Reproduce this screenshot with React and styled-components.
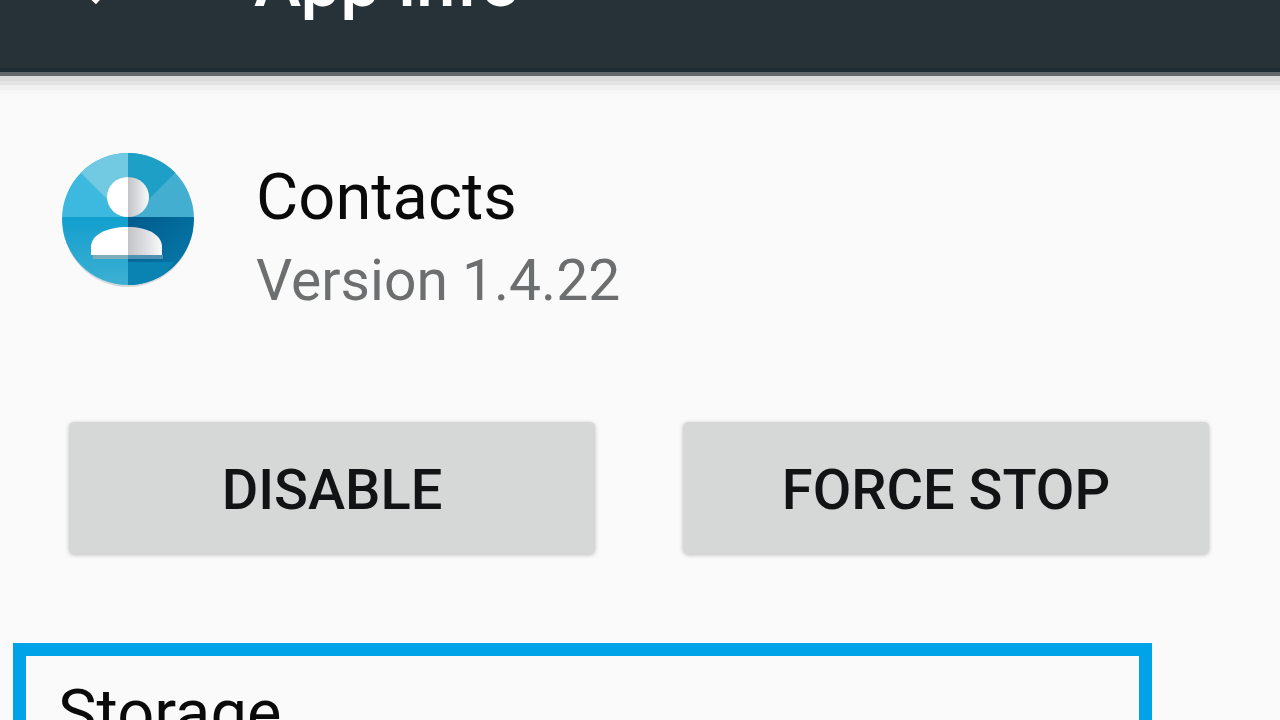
import React from 'react';
import styled, { createGlobalStyle } from 'styled-components';

const GlobalStyle = createGlobalStyle`
  * {
    box-sizing: border-box;
  }

  body {
    margin: 0;
    background: #fafafa;
    font-family: Roboto, 'Liberation Sans', sans-serif;
  }
`;

const Screen = styled.div`
  height: 100vh;
  overflow: hidden;
  background: #fafafa;
`;

// the toolbar is partly scrolled out at the top
const Toolbar = styled.header`
  display: flex;
  align-items: center;
  gap: 112px;
  height: 188px;
  margin-top: -112px;
  padding: 4px 50px 0;
  background: #273238;
  border-bottom: 4px solid #62676a;
  box-shadow:
    inset 0 -4px 0 #1e2b33,
    0 5px 0 #dbdbdb,
    0 9px 0 #e4e4e4,
    0 14px 0 #f0f0f0,
    0 18px 0 #f7f7f7;
`;

const BackButton = styled.button`
  display: flex;
  padding: 0;
  border: 0;
  background: none;
  color: #fff;
`;

const Title = styled.h1`
  margin: 0;
  color: #fff;
  font-size: 71px;
  font-weight: 500;
  line-height: 80px;
`;

const AppHeader = styled.section`
  display: flex;
  align-items: flex-start;
  gap: 60px;
  padding: 76px 60px 0;
`;

const AppIcon = styled.svg`
  flex: none;
  width: 136px;
  height: 136px;
`;

const AppName = styled.h2`
  margin: 0;
  color: #0a0a0a;
  font-size: 65px;
  font-weight: 400;
  line-height: 90px;
`;

const AppVersion = styled.p`
  margin: 0;
  color: #6c6e6f;
  font-size: 57px;
  line-height: 78px;
`;

const Actions = styled.div`
  display: grid;
  grid-template-columns: 1fr 1fr;
  gap: 88px;
  padding: 102px 71px 0 69px;
`;

const ActionButton = styled.button`
  height: 132px;
  padding: 4px 0 0;
  border: 0;
  border-radius: 5px;
  background: #d6d7d7;
  box-shadow: 0 1px 4px rgba(0, 0, 0, 0.24);
  color: #111314;
  font-family: inherit;
  font-size: 56px;
  font-weight: 500;
  line-height: 80px;
  text-transform: uppercase;
`;

const StorageItem = styled.section`
  margin: 89px 128px 0 13px;
  padding: 12px 32px 60px;
  border: 13px solid #00a2e8;
`;

function ContactsIcon() {
  return (
    <AppIcon viewBox="0 0 136 136" role="img" aria-label="Contacts">
      <defs>
        <clipPath id="disc">
          <circle cx="68" cy="67" r="66" />
        </clipPath>
        <linearGradient id="shade" x1="0" x2="1" y1="0" y2="0">
          <stop offset="0" stopColor="#c4c5c9" />
          <stop offset="0.5" stopColor="#dcdde0" />
          <stop offset="1" stopColor="#fafafa" />
        </linearGradient>
        <linearGradient id="deep" x1="0" x2="1" y1="0" y2="1">
          <stop offset="0" stopColor="#005a8c" />
          <stop offset="1" stopColor="#0880b0" />
        </linearGradient>
        <linearGradient id="low" x1="0" x2="0" y1="0" y2="1">
          <stop offset="0" stopColor="#129fce" />
          <stop offset="1" stopColor="#3fb0d3" />
        </linearGradient>
      </defs>
      <circle cx="68" cy="70" r="65" fill="#d3d8da" />
      <g clipPath="url(#disc)">
        <path d="M0 0h68v65H0z" fill="#3db9df" />
        <path d="M16 16L68 68V0H16z" fill="#72c9e2" />
        <path d="M68 0h68v65H68z" fill="#43aed0" />
        <path d="M68 0h52v16L68 68z" fill="#1d9fc6" />
        <path d="M0 65h68v71H0z" fill="url(#low)" />
        <path d="M68 65h68v71H68z" fill="url(#deep)" />
        <path d="M68 110h46l-20 26H68z" fill="#0a83b2" />
        <path d="M33 103h35v4H33z" fill="#7fabbb" />
        <path d="M68 103h35v4H68z" fill="#4e91b2" />
      </g>
      <path d="M68 25a21 20 0 0 0 0 40z" fill="#fff" />
      <path d="M68 25a21 20 0 0 1 0 40z" fill="url(#shade)" />
      <path d="M68 75c-22 0-37 8-37 20v8h37z" fill="#fff" />
      <path d="M68 75c20 0 34 8 34 20v8H68z" fill="url(#shade)" />
    </AppIcon>
  );
}

export default function App() {
  return (
    <>
      <GlobalStyle />
      <Screen>
        <Toolbar>
          <BackButton type="button" aria-label="Back">
            <svg width="92" height="64" viewBox="0 0 92 64" fill="none">
              <path d="M80 28H22M50 4L22 28l26 24" stroke="currentColor" strokeWidth="6" />
            </svg>
          </BackButton>
          <Title>App info</Title>
        </Toolbar>
        <AppHeader>
          <ContactsIcon />
          <div>
            <AppName>Contacts</AppName>
            <AppVersion>Version 1.4.22</AppVersion>
          </div>
        </AppHeader>
        <Actions>
          <ActionButton type="button">Disable</ActionButton>
          <ActionButton type="button">Force stop</ActionButton>
        </Actions>
        <StorageItem>
          <AppName>Storage</AppName>
        </StorageItem>
      </Screen>
    </>
  );
}
